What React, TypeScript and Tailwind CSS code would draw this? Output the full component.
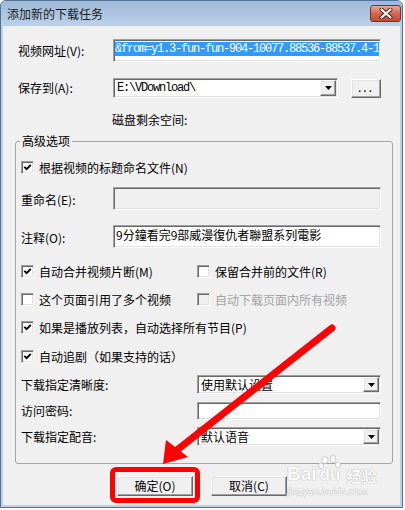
import React from 'react';

const sunken =
  'border border-t-[#a0a0a0] border-l-[#a0a0a0] border-r-white border-b-white shadow-[inset_1px_1px_0_#696969,inset_-1px_-1px_0_#e3e3e3]';
const raised =
  'border border-t-white border-l-white border-r-[#696969] border-b-[#696969] shadow-[inset_-1px_-1px_0_#a0a0a0,inset_1px_1px_0_#e3e3e3]';

function Check({ checked = false, disabled = false }: { checked?: boolean; disabled?: boolean }) {
  return (
    <span
      className={`w-[13px] h-[13px] shrink-0 flex items-center justify-center ${sunken} ${
        disabled ? 'bg-[#f0f0f0]' : 'bg-white'
      }`}
    >
      {checked && (
        <svg width="9" height="9" viewBox="0 0 9 9">
          <path d="M1.3 3.8 L3.6 6.2 L7.8 1.8" fill="none" stroke="#000" strokeWidth="1.9" />
        </svg>
      )}
    </span>
  );
}

function CheckRow({ checked, disabled, label }: { checked?: boolean; disabled?: boolean; label: string }) {
  return (
    <div className="flex items-center gap-[5px]">
      <Check checked={checked} disabled={disabled} />
      <span className={disabled ? 'text-[#a3a3a3]' : 'text-black'}>{label}</span>
    </div>
  );
}

function DropBtn() {
  return (
    <span className={`w-[16px] h-full shrink-0 bg-[#f0f0f0] flex items-center justify-center ${raised}`}>
      <svg width="7" height="4" viewBox="0 0 7 4">
        <path d="M0 0 H7 L3.5 4 Z" fill="#000" />
      </svg>
    </span>
  );
}

function Combo({ w, text, mono }: { w: string; text: string; mono?: boolean }) {
  return (
    <div className={`${w} h-full ${sunken} bg-white flex items-stretch p-[1px]`}>
      <span
        className={`flex-1 flex items-center pl-[2px] overflow-hidden whitespace-nowrap ${
          mono ? "font-['Liberation_Mono',monospace] tracking-[-1.2px]" : ''
        }`}
      >
        {text}
      </span>
      <DropBtn />
    </div>
  );
}

export default function App() {
  return (
    <div className="w-[405px] h-[510px] bg-white relative overflow-hidden font-['Noto_Sans_CJK_SC',sans-serif] text-[12px] leading-none text-black">
      {/* window frame */}
      <div className="w-[403px] h-[508px] flex flex-col rounded-t-[6px] border border-[#4f7299] bg-[#bcd2ea]">
        {/* title bar */}
        <div className="h-[25px] flex justify-between rounded-t-[5px] bg-gradient-to-b from-[#9fb9d7] to-[#bcd1e9]">
          <span className="pl-[6px] self-center text-[12px] text-[#1a1a1a]">添加新的下载任务</span>
          <span className="mt-[4px] mr-[1px] w-[31px] h-[17px] rounded-[3px] border border-[#7a3126] bg-gradient-to-b from-[#e9a899] via-[#d2664f] to-[#c24a33] flex items-center justify-center">
            <svg width="14" height="11" viewBox="0 0 14 11">
              <path d="M2.5 1.5 L11.5 9.5 M11.5 1.5 L2.5 9.5" stroke="#4a1e18" strokeWidth="4" strokeLinecap="round" />
              <path d="M2.5 1.5 L11.5 9.5 M11.5 1.5 L2.5 9.5" stroke="#fff" strokeWidth="2.2" strokeLinecap="round" />
            </svg>
          </span>
        </div>

        {/* client area */}
        <div className="flex-1 mx-[2px] mb-[2px] bg-[#f0f0f0] flex flex-col">
          {/* url */}
          <div className="mt-[13px] h-[23px] flex items-center pl-[15px]">
            <span className="w-[95px]">视频网址(V):</span>
            <div className={`w-[268px] h-[23px] ${sunken} bg-white pl-[1px] pt-[1px] overflow-hidden`}>
              <span className="inline-block h-[14px] leading-[14px] bg-[#3399ff] text-white whitespace-nowrap font-['Liberation_Mono',monospace] tracking-[-1.2px]">
                &amp;from=y1.3-fun-fun-904-10077.88536-88537.4-1
              </span>
            </div>
          </div>

          {/* save to */}
          <div className="mt-[16px] h-[20px] flex items-center pl-[15px]">
            <span className="w-[95px]">保存到(A):</span>
            <Combo w="w-[225px]" text="E:\VDownload\" mono />
            <button className={`ml-[13px] w-[30px] h-[19px] bg-[#f0f0f0] ${raised} flex items-center justify-center tracking-[2px] pb-[2px]`}>
              ...
            </button>
          </div>

          {/* disk space */}
          <div className="mt-[14px] h-[16px] flex items-center pl-[109px]">磁盘剩余空间:</div>

          {/* group box */}
          <div className="mt-[13px] ml-[12px] w-[378px] h-[323px] border border-[#a5a5a5] rounded-[3px] relative flex flex-col">
            <span className="absolute left-[4px] top-[-8px] px-[2px] bg-[#f0f0f0] leading-[14px]">高级选项</span>

            <div className="mt-[19px] h-[13px] flex items-center pl-[5px]">
              <CheckRow checked label="根据视频的标题命名文件(N)" />
            </div>

            <div className="mt-[13px] h-[23px] flex items-center pl-[5px]">
              <span className="w-[92px] pt-[3px]">重命名(E):</span>
              <div className={`w-[268px] h-[23px] ${sunken} bg-[#f0f0f0]`} />
            </div>

            <div className="mt-[15px] h-[23px] flex items-center pl-[5px]">
              <span className="w-[92px] pt-[2px]">注释(O):</span>
              <div className={`w-[268px] h-[23px] ${sunken} bg-white pl-[2px] pt-[3px] whitespace-nowrap`}>
                9分鐘看完9部威漫復仇者聯盟系列電影
              </div>
            </div>

            <div className="mt-[17px] h-[13px] flex items-center pl-[5px]">
              <div className="w-[176px]">
                <CheckRow checked label="自动合并视频片断(M)" />
              </div>
              <CheckRow label="保留合并前的文件(R)" />
            </div>

            <div className="mt-[15px] h-[13px] flex items-center pl-[5px]">
              <div className="w-[176px]">
                <CheckRow label="这个页面引用了多个视频" />
              </div>
              <CheckRow disabled label="自动下载页面内所有视频" />
            </div>

            <div className="mt-[15px] h-[13px] flex items-center pl-[5px]">
              <CheckRow checked label="如果是播放列表，自动选择所有节目(P)" />
            </div>

            <div className="mt-[16px] h-[13px] flex items-center pl-[5px]">
              <CheckRow checked label="自动追剧（如果支持的话）" />
            </div>

            <div className="mt-[12px] h-[19px] flex items-center pl-[5px]">
              <span className="w-[176px]">下载指定清晰度:</span>
              <Combo w="w-[184px]" text="使用默认设置" />
            </div>

            <div className="mt-[8px] h-[18px] flex items-center pl-[5px]">
              <span className="w-[176px]">访问密码:</span>
              <div className={`w-[184px] h-[18px] ${sunken} bg-white`} />
            </div>

            <div className="mt-[7px] h-[19px] flex items-center pl-[5px]">
              <span className="w-[176px]">下载指定配音:</span>
              <Combo w="w-[184px]" text="默认语音" />
            </div>
          </div>

          {/* buttons */}
          <div className="mt-[12px] h-[20px] flex items-center pl-[114px] gap-[18px]">
            <button className={`w-[76px] h-[20px] bg-[#f0f0f0] ${raised} flex items-center justify-center`}>确定(O)</button>
            <button className={`w-[76px] h-[20px] bg-[#f0f0f0] ${raised} flex items-center justify-center`}>取消(C)</button>
          </div>
        </div>
      </div>

      {/* baidu watermark */}
      <div className="absolute left-[287px] top-[455px] w-[92px] flex flex-col items-start text-white [text-shadow:0_0_1px_#b0b0b0,0_0_1px_#b0b0b0] pointer-events-none">
        <div className="flex items-end h-[28px]">
          <span className="font-['Liberation_Sans',sans-serif] font-bold text-[19px] leading-none">Bai</span>
          <span className="relative w-[28px] h-[28px]">
            <svg width="28" height="28" viewBox="0 0 28 28" className="absolute left-0 top-0">
              <g fill="#fff" stroke="#c0c0c0" strokeWidth="0.8">
                <ellipse cx="8" cy="5" rx="3" ry="3.5" />
                <ellipse cx="16" cy="4" rx="3" ry="3.5" />
                <ellipse cx="4" cy="11" rx="2.6" ry="3" />
                <ellipse cx="21" cy="10" rx="2.6" ry="3" />
              </g>
            </svg>
            <span className="absolute left-[3px] bottom-0 font-['Liberation_Sans',sans-serif] font-bold text-[17px] leading-none">du</span>
          </span>
          <span className="font-bold text-[15px] leading-none ml-[2px]">经验</span>
        </div>
        <span className="mt-[4px] font-['Liberation_Sans',sans-serif] text-[10px] italic leading-none">jingyan.baidu.com</span>
      </div>

      {/* red highlight around OK */}
      <div className="absolute left-[110px] top-[467px] w-[90px] h-[36px] border-[5px] border-[#ff0000] rounded-[6px] pointer-events-none" />

      {/* red arrow */}
      <svg className="absolute left-0 top-0 pointer-events-none" width="405" height="510" viewBox="0 0 405 510">
        <line x1="332" y1="328" x2="177" y2="450" stroke="#ff0000" strokeWidth="7" strokeLinecap="round" />
        <polygon points="163,464 166,440 188,457" fill="#ff0000" />
      </svg>
    </div>
  );
}
